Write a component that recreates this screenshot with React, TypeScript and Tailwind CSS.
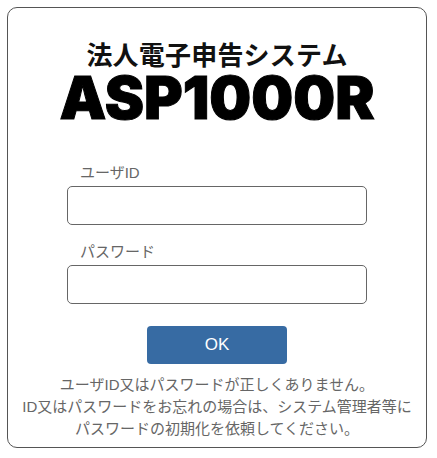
import * as React from "react";

const font = { jp: "font-['Liberation_Sans','Noto_Sans_CJK_JP',sans-serif]" };

function Field({ label, type }: { label: string; type: string }) {
  return (
    <div className="flex flex-col">
      <label className="pl-[13px] pb-[3px] text-[15px] leading-[20px] text-[#666666]">{label}</label>
      <input
        type={type}
        className="h-[39px] w-[300px] rounded-[5px] border border-[#666666] bg-white"
      />
    </div>
  );
}

export default function App() {
  return (
    <div className={`h-[458px] w-[437px] bg-white pl-[7px] pt-[7px] ${font.jp}`}>
      <div className="flex h-[441px] w-[420px] flex-col items-center rounded-[10px] border border-[#555555] bg-white">
        {/* Logo */}
        <div className="mt-[33px] text-center text-[26px] font-bold leading-[26px] text-[#111111] tracking-[0.2px] font-['Noto_Sans_CJK_JP',sans-serif]">
          法人電子申告システム
        </div>
        <div className="mt-[9px] text-[59px] font-black leading-[44px] text-black font-['Inter',sans-serif] [-webkit-text-stroke:1px_black]">
          ASP1000R
        </div>

        {/* Form */}
        <div className="mt-[43px] flex flex-col gap-[17px]">
          <Field label="ユーザID" type="text" />
          <Field label="パスワード" type="password" />
        </div>

        <button className="mt-[22px] h-[38px] w-[140px] rounded-[4px] bg-[#376BA3] text-[17px] text-white">
          OK
        </button>

        <p className="mt-[10px] text-center text-[15px] leading-[22px] text-[#666666]">
          ユーザID又はパスワードが正しくありません。
          <br />
          ID又はパスワードをお忘れの場合は、システム管理者等に
          <br />
          パスワードの初期化を依頼してください。
        </p>
      </div>
    </div>
  );
}
